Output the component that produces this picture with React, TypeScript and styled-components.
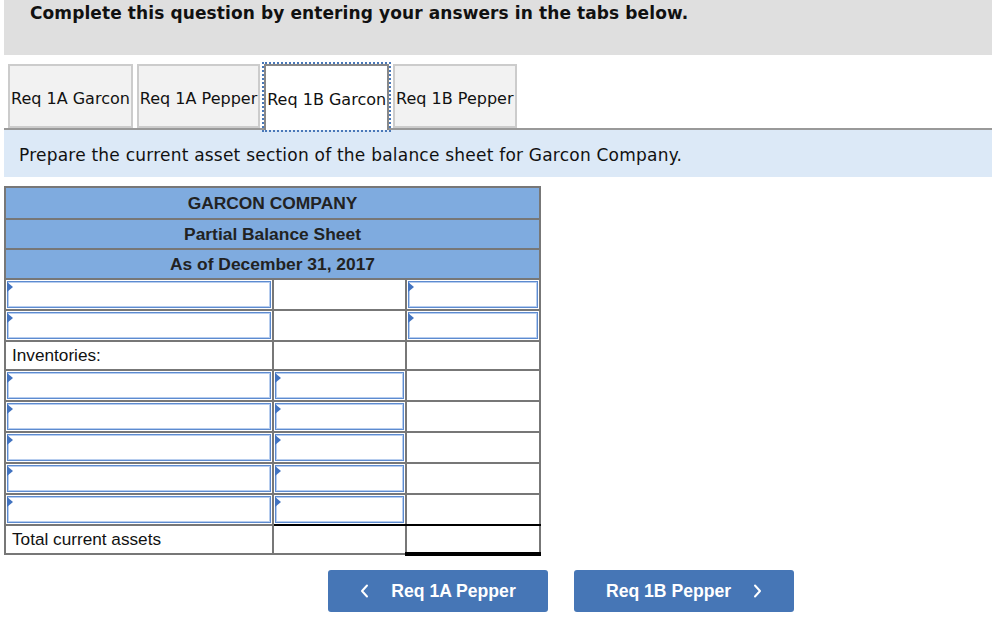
import React from "react";
import styled, { createGlobalStyle } from "styled-components";

const GlobalStyle = createGlobalStyle`
  body {
    margin: 0;
    background: #ffffff;
    font-family: "DejaVu Sans", Verdana, sans-serif;
  }
`;

type CellKind = "input" | "plain" | "label";

type Row = {
  cells: { kind: CellKind; text?: string; under?: "single" | "double" }[];
};

const rows: Row[] = [
  { cells: [{ kind: "input" }, { kind: "plain" }, { kind: "input" }] },
  { cells: [{ kind: "input" }, { kind: "plain" }, { kind: "input" }] },
  { cells: [{ kind: "label", text: "Inventories:" }, { kind: "plain" }, { kind: "plain" }] },
  { cells: [{ kind: "input" }, { kind: "input" }, { kind: "plain" }] },
  { cells: [{ kind: "input" }, { kind: "input" }, { kind: "plain" }] },
  { cells: [{ kind: "input" }, { kind: "input" }, { kind: "plain" }] },
  { cells: [{ kind: "input" }, { kind: "input" }, { kind: "plain" }] },
  { cells: [{ kind: "input" }, { kind: "input", under: "single" }, { kind: "plain", under: "single" }] },
  {
    cells: [
      { kind: "label", text: "Total current assets" },
      { kind: "plain" },
      { kind: "plain", under: "double" },
    ],
  },
];

const tabs = ["Req 1A Garcon", "Req 1A Pepper", "Req 1B Garcon", "Req 1B Pepper"];

const ChevronIcon = ({ dir }: { dir: "left" | "right" }) => (
  <svg width="9" height="14" viewBox="0 0 9 14" fill="none">
    <polyline
      points={dir === "left" ? "7,1.5 2,7 7,12.5" : "2,1.5 7,7 2,12.5"}
      stroke="#fff"
      strokeWidth="2"
      strokeLinecap="round"
      strokeLinejoin="round"
    />
  </svg>
);

const App = () => {
  return (
    <Page>
      <GlobalStyle />
      <Banner>Complete this question by entering your answers in the tabs below.</Banner>
      <TabBar>
        {tabs.map((t) => (
          <Tab key={t} active={t === "Req 1B Garcon"}>
            {t}
          </Tab>
        ))}
      </TabBar>
      <Instruction>Prepare the current asset section of the balance sheet for Garcon Company.</Instruction>
      <Sheet>
        <colgroup>
          <col style={{ width: 268 }} />
          <col style={{ width: 133 }} />
          <col style={{ width: 134 }} />
        </colgroup>
        <tbody>
          <tr>
            <HeadCell colSpan={3} tall>
              GARCON COMPANY
            </HeadCell>
          </tr>
          <tr>
            <HeadCell colSpan={3}>Partial Balance Sheet</HeadCell>
          </tr>
          <tr>
            <HeadCell colSpan={3}>As of December 31, 2017</HeadCell>
          </tr>
          {rows.map((r, i) => (
            <tr key={i}>
              {r.cells.map((c, j) => (
                <Cell key={j} under={c.under}>
                  {c.kind === "input" && (
                    <InputBox>
                      <Marker />
                    </InputBox>
                  )}
                  {c.kind === "label" && <Label>{c.text}</Label>}
                </Cell>
              ))}
            </tr>
          ))}
        </tbody>
      </Sheet>
      <NavRow>
        <NavButton>
          <ChevronIcon dir="left" />
          Req 1A Pepper
        </NavButton>
        <NavButton>
          Req 1B Pepper
          <ChevronIcon dir="right" />
        </NavButton>
      </NavRow>
    </Page>
  );
};

export default App;

const Page = styled.div`
  width: 992px;
  padding-left: 4px;
  box-sizing: border-box;
`;

const Banner = styled.div`
  height: 55px;
  background: #dfdfdf;
  padding: 3px 0 0 26px;
  box-sizing: border-box;
  font-family: "DejaVu Sans", Verdana, sans-serif;
  font-weight: bold;
  font-size: 17px;
  letter-spacing: 0.1px;
  color: #111;
`;

const TabBar = styled.div`
  display: flex;
  align-items: flex-end;
  gap: 4px;
  margin-top: 9px;
  padding-left: 4px;
  height: 64px;
  border-bottom: 2px solid #999;
`;

const Tab = styled.div<{ active?: boolean }>`
  height: ${(p) => (p.active ? "66px" : "64px")};
  margin-bottom: ${(p) => (p.active ? "-2px" : "0")};
  display: flex;
  align-items: center;
  padding: ${(p) => (p.active ? "2px 1px 0" : "4px 1px 0")};
  box-sizing: border-box;
  font-size: 16px;
  color: #111;
  background: ${(p) => (p.active ? "#ffffff" : "#f2f2f2")};
  border: 2px solid ${(p) => (p.active ? "#888" : "#ccc")};
  border-bottom: ${(p) => (p.active ? "none" : "2px solid #ccc")};
  outline: ${(p) => (p.active ? "2px dotted #4a78b8" : "none")};
  outline-offset: 0;
  white-space: nowrap;
`;

const Instruction = styled.div`
  height: 47px;
  background: #dce9f7;
  padding: 3px 0 0 15px;
  box-sizing: border-box;
  display: flex;
  align-items: center;
  font-size: 17px;
  letter-spacing: 0.22px;
  color: #111;
`;

const Sheet = styled.table`
  margin-top: 9px;
  width: 535px;
  border-collapse: collapse;
  table-layout: fixed;
  font-family: "Liberation Sans", Arial, sans-serif;
  border: 2px solid #777;
`;

const HeadCell = styled.td<{ tall?: boolean }>`
  height: ${(p) => (p.tall ? "30px" : "28px")};
  padding: 0;
  background: #7fabdf;
  border: 2px solid #777;
  text-align: center;
  font-weight: bold;
  font-size: 17.4px;
  color: #222;
`;

const Cell = styled.td<{ under?: "single" | "double" }>`
  height: 29px;
  padding: 1px;
  box-sizing: border-box;
  border: 2px solid #777;
  border-bottom: ${(p) =>
    p.under === "double" ? "4px solid #000" : p.under === "single" ? "2px solid #000" : "2px solid #777"};
  background: #fff;
  vertical-align: middle;
`;

const InputBox = styled.div`
  position: relative;
  height: 27px;
  box-sizing: border-box;
  border: 1px solid #5d8bd0;
  box-shadow: inset 0 0 0 1px #b7cdee;
  background: #fff;
`;

const Marker = styled.span`
  position: absolute;
  left: -1px;
  top: 0;
  width: 0;
  height: 0;
  border-top: 5px solid transparent;
  border-bottom: 5px solid transparent;
  border-left: 6px solid #4273c0;
`;

const Label = styled.div`
  padding-left: 5px;
  font-size: 17.2px;
  color: #111;
`;

const NavRow = styled.div`
  display: flex;
  gap: 26px;
  margin-top: 14px;
  padding-left: 324px;
`;

const NavButton = styled.button`
  width: 220px;
  height: 42px;
  border: none;
  border-radius: 3px;
  background: #4676b6;
  color: #fff;
  font-family: "Liberation Sans", Arial, sans-serif;
  font-weight: bold;
  font-size: 17.6px;
  display: flex;
  align-items: center;
  justify-content: center;
  gap: 22px;
  cursor: pointer;
`;
